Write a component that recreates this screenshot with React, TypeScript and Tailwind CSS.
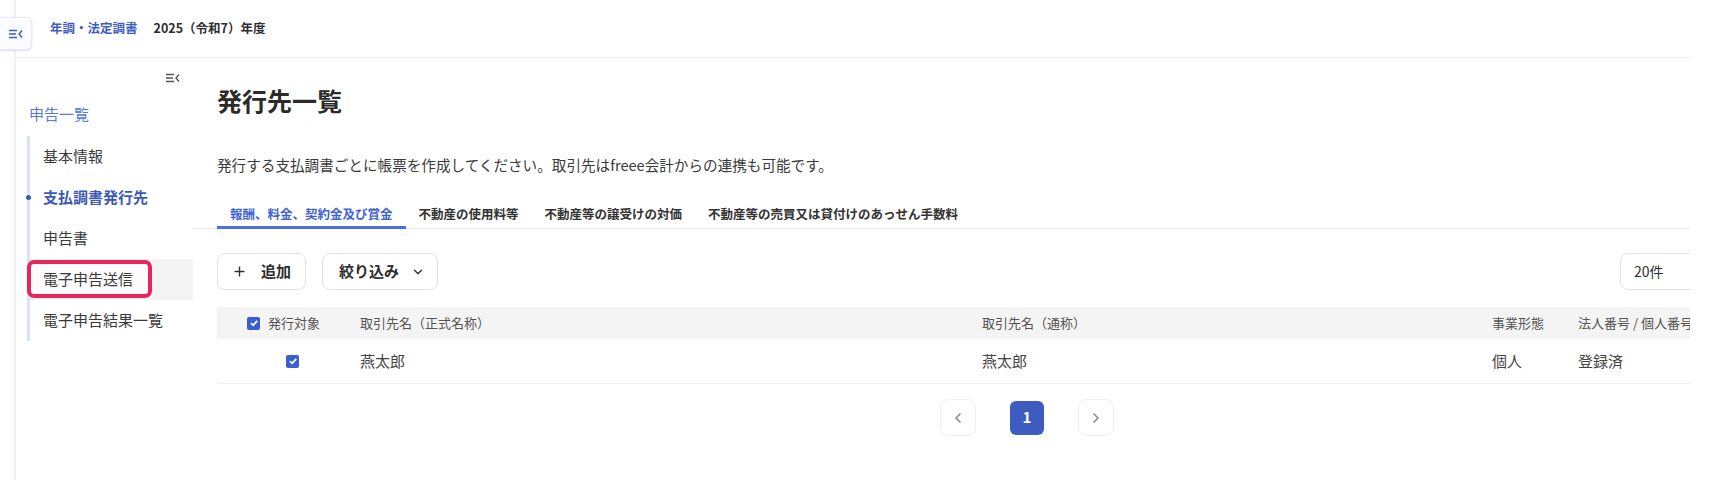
import { ChevronDown, ChevronLeft, ChevronRight, Plus } from "lucide-react";

const navItems = [
  { label: "基本情報" },
  { label: "支払調書発行先", active: true },
  { label: "申告書" },
  { label: "電子申告送信", marked: true },
  { label: "電子申告結果一覧" },
];

const tabs = [
  "報酬、料金、契約金及び賞金",
  "不動産の使用料等",
  "不動産等の譲受けの対価",
  "不動産等の売買又は貸付けのあっせん手数料",
];

const MenuCollapse = ({ color }: { color: string }) => (
  <svg width="14" height="10" viewBox="0 0 14 10" fill="none" stroke={color} strokeWidth="1.4">
    <path d="M0 1.5h8M0 5h7M0 8.5h8" />
    <path d="M13 1.5 10 5l3 3.5" />
  </svg>
);

const Check = () => (
  <span className="flex h-[13px] w-[13px] items-center justify-center rounded-[2px] bg-[#3b5fd0]">
    <svg width="10" height="10" viewBox="0 0 10 10" fill="none" stroke="white" strokeWidth="1.8">
      <path d="M2 5.2 4.2 7.3 8.2 2.8" />
    </svg>
  </span>
);

const App = () => {
  return (
    <div className="relative h-[497px] w-[1730px] overflow-hidden bg-white font-['Noto_Sans_CJK_JP','Noto_Sans',sans-serif] text-[#333]">
      <div className="flex">
        <div className="w-[14px] shrink-0" />
        <div className="flex h-[480px] w-[1676px] shrink-0 flex-col overflow-hidden border-l-2 border-[#edf0fa]">
          {/* header */}
          <div className="flex h-[58px] shrink-0 items-center gap-[16px] border-b border-[#efefef] pl-[34px] text-[12.5px] font-bold">
            <span className="text-[#3d5cc4]">年調・法定調書</span>
            <span className="text-[#2e2e2e]">2025（令和7）年度</span>
          </div>

          <div className="flex flex-1">
            {/* sidebar */}
            <aside className="w-[177px] shrink-0">
              <div className="flex h-[40px] items-center justify-end pr-[13px]">
                <MenuCollapse color="#555" />
              </div>
              <div className="mt-[5px] pl-[13px] text-[15px] leading-[22px] text-[#5579de]">申告一覧</div>
              <ul className="mt-[11px] ml-[11px] border-l-[3px] border-[#d9e2fb]">
                {navItems.map((item) => (
                  <li
                    key={item.label}
                    className={`relative flex h-[41px] items-center pl-[13px] text-[15px] ${
                      item.marked ? "bg-[#f5f4f4]" : ""
                    } ${item.active ? "font-bold text-[#3c58b8]" : "text-[#3a3a3a]"}`}
                  >
                    {item.active && (
                      <span className="absolute left-[-4px] top-[18px] h-[5px] w-[5px] rounded-full bg-[#3c58b8]" />
                    )}
                    {item.marked && (
                      <span className="absolute left-[-3px] top-[1px] bottom-[2px] w-[125px] rounded-[7px] border-[4px] border-[#e8245c] bg-[#fbfbfb]" />
                    )}
                    <span className="relative">{item.label}</span>
                  </li>
                ))}
              </ul>
            </aside>

            {/* main */}
            <main className="w-[1668px] shrink-0">
              <h1 className="mt-[26px] pl-[24px] text-[25px] font-bold leading-[32px] text-[#2b2b2b]">発行先一覧</h1>
              <p className="mt-[38px] pl-[24px] text-[14.6px] leading-[22px] text-[#3a3a3a]">
                発行する支払調書ごとに帳票を作成してください。取引先はfreee会計からの連携も可能です。
              </p>

              <div className="mt-[29px] flex border-b border-[#ebebeb] pl-[24px]">
                {tabs.map((tab, i) => (
                  <div
                    key={tab}
                    className={`-mb-px border-b-[3px] px-[13px] pb-[3px] text-[12.5px] font-bold leading-[18px] ${
                      i === 0 ? "border-[#4a6fe3] text-[#3f63d6]" : "border-transparent text-[#333]"
                    }`}
                  >
                    {tab}
                  </div>
                ))}
              </div>

              <div className="mt-[24px] ml-[24px] flex w-[1620px] items-center">
                <button className="flex h-[37px] w-[89px] items-center gap-[14px] rounded-[8px] border border-[#e3e3e3] pl-[14px] text-[15px] font-bold text-[#2e2e2e]">
                  <Plus size={15} strokeWidth={2.2} />
                  追加
                </button>
                <button className="ml-[16px] flex h-[37px] w-[116px] items-center gap-[12px] rounded-[8px] border border-[#e3e3e3] pl-[16px] text-[15px] font-bold text-[#2e2e2e]">
                  絞り込み
                  <ChevronDown size={14} strokeWidth={2.2} />
                </button>
                <div className="ml-auto mr-[17px] flex h-[37px] w-[200px] items-center rounded-[8px] border border-[#e3e3e3] pl-[13px] text-[14px] text-[#2e2e2e]">
                  20件
                </div>
              </div>

              <div className="mt-[17px] ml-[24px] w-[1620px]">
                <div className="grid h-[32px] grid-cols-[143px_622px_510px_86px_1fr] items-center bg-[#f5f4f4] text-[13px] text-[#555]">
                  <div className="flex items-center gap-[8px] pl-[30px]">
                    <Check />
                    発行対象
                  </div>
                  <div>取引先名（正式名称）</div>
                  <div>取引先名（通称）</div>
                  <div>事業形態</div>
                  <div className="whitespace-nowrap">法人番号 / 個人番号</div>
                </div>
                <div className="grid h-[45px] grid-cols-[143px_622px_510px_86px_1fr] items-center border-b border-[#efefef] text-[15px] text-[#444]">
                  <div className="pl-[69px]">
                    <Check />
                  </div>
                  <div>燕太郎</div>
                  <div>燕太郎</div>
                  <div>個人</div>
                  <div>登録済</div>
                </div>
              </div>

              <div className="mt-[15px] ml-[24px] flex w-[1620px] items-center justify-center gap-[34px]">
                <button className="flex h-[37px] w-[36px] items-center justify-center rounded-[8px] border border-[#efefef] text-[#888]">
                  <ChevronLeft size={16} strokeWidth={2.4} />
                </button>
                <button className="flex h-[34px] w-[34px] items-center justify-center rounded-[6px] bg-[#3e5bbf] text-[15px] font-bold text-white">
                  1
                </button>
                <button className="flex h-[37px] w-[36px] items-center justify-center rounded-[8px] border border-[#efefef] text-[#888]">
                  <ChevronRight size={16} strokeWidth={2.4} />
                </button>
              </div>
            </main>
          </div>
        </div>
      </div>

      {/* sidebar toggle tab over the left edge */}
      <div className="absolute left-[-10px] top-[17px] flex h-[33px] w-[42px] items-center justify-end rounded-[6px] border border-[#e6e9f5] bg-[#fbfcff] pr-[8px] shadow-sm">
        <MenuCollapse color="#3d5cc4" />
      </div>
    </div>
  );
};

export default App;
